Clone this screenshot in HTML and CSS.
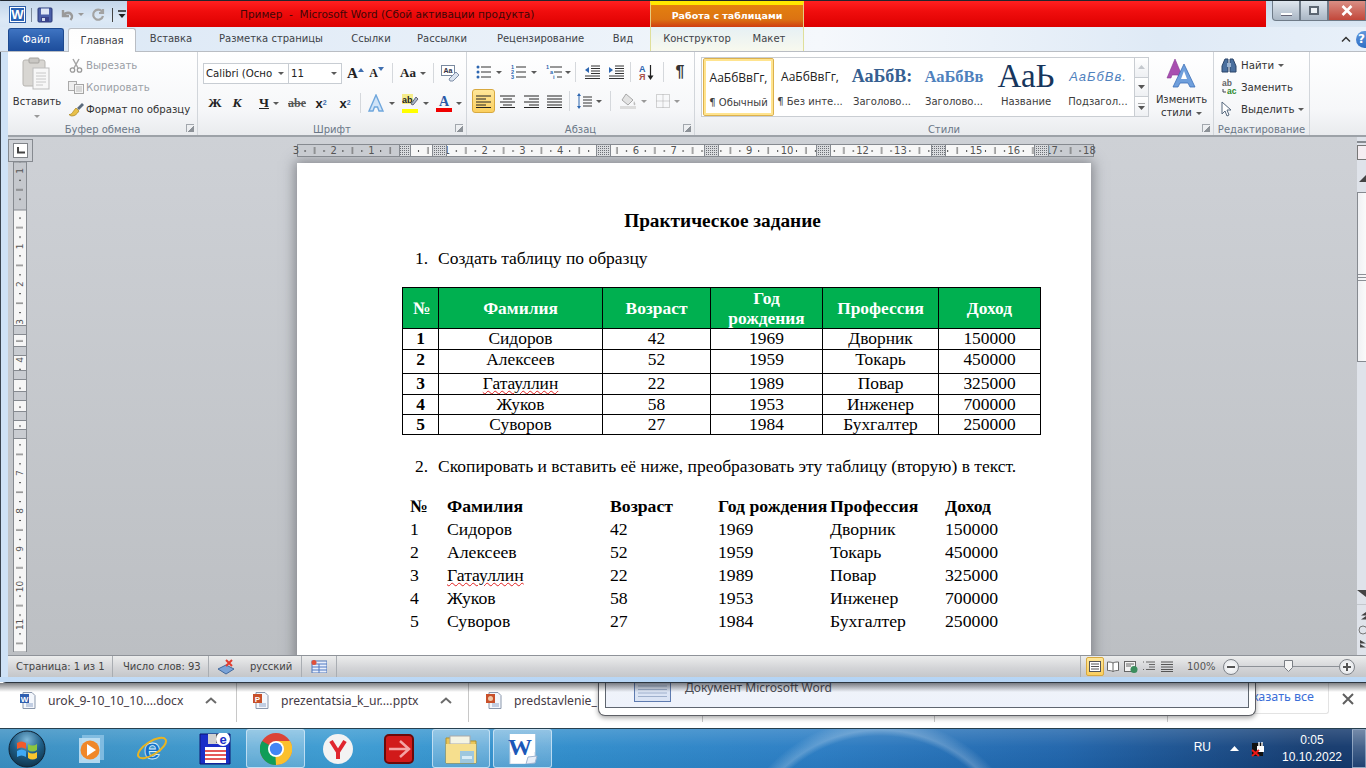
FILE: index.html
```html
<!DOCTYPE html>
<html lang="ru">
<head>
<meta charset="utf-8">
<title>Пример - Microsoft Word</title>
<link rel="stylesheet" href="styles.css">
</head>
<body>
<div class="screen">
  <div class="window">
    <div class="titlebar">
      <div class="qat">
        <svg class="qat-word" width="17" height="17" viewBox="0 0 17 17"><rect x=".5" y=".5" width="16" height="16" fill="#fff" stroke="#2f5fa8"/><rect x="2" y="2" width="13" height="13" fill="#2a62b4"/><text x="8.5" y="13" class="svg-w">W</text></svg>
        <span class="qat-sep"></span>
        <svg width="16" height="16" viewBox="0 0 16 16"><rect x="1" y="1" width="14" height="14" rx="1" fill="#4b5fa8" stroke="#2a3a78"/><rect x="4" y="1.500" width="8" height="6" fill="#dfe7f5"/><rect x="4" y="10" width="8" height="5" fill="#39428a"/><rect x="5" y="11" width="3" height="3" fill="#cfd8ea"/></svg>
        <svg class="qat-undo" width="14" height="14" viewBox="0 0 14 14"><path d="M3 2v6h6M3.500 7.500C6 3.500 11 4 12 8c.3 1.500-.5 3-1.500 4" fill="none" stroke="#9a9a9a" stroke-width="2.400"/></svg>
        <span class="caret caret-grey qat-c"></span>
        <svg class="qat-redo" width="14" height="14" viewBox="0 0 14 14"><path d="M11 3.500A5 5 0 1 0 12 8M12 1v4H8" fill="none" stroke="#a3a3a3" stroke-width="2.200"/></svg>
        <span class="qat-sep qat-sep2"></span>
        <svg width="8" height="9" viewBox="0 0 8 9"><path d="M0 1h8" stroke="#222" stroke-width="1.500"/><path d="M.5 4h7L4 8z" fill="#222"/></svg>
      </div>
      <div class="red red-left"><span class="doc-title">Пример&nbsp; -&nbsp; Microsoft Word (Сбой активации продукта)</span></div>
      <div class="context-head"><span>Работа с таблицами</span></div>
      <div class="red red-right"></div>
      <div class="winbtns">
        <div class="wb wb-min"><span class="wb-dash"></span></div>
        <div class="wb wb-max"><span class="wb-sq"></span></div>
        <div class="wb wb-close">
          <svg width="12" height="11" viewBox="0 0 12 11"><path d="M1.500 1l9 9M10.500 1l-9 9" stroke="#fff" stroke-width="2.600"/></svg>
        </div>
      </div>
    </div>

    <div class="tabs">
      <div class="tab tab-file">Файл</div>
      <div class="tab tab-home">Главная</div>
      <div class="tab t70">Вставка</div>
      <div class="tab t130">Разметка страницы</div>
      <div class="tab t70">Ссылки</div>
      <div class="tab t72">Рассылки</div>
      <div class="tab t125">Рецензирование</div>
      <div class="tab t40">Вид</div>
      <div class="tab-spacer7"></div>
      <div class="context-tabs">
        <div class="tab t92">Конструктор</div>
        <div class="tab t52">Макет</div>
      </div>
      <div class="tabs-right">
        <svg width="10" height="7" viewBox="0 0 10 7"><path d="M1 5.500L5 1.500l4 4" fill="none" stroke="#333" stroke-width="1.500"/></svg>
        <span class="help">?</span>
      </div>
    </div>

    <div class="ribbon">
      <section class="group g-clip">
        <div class="g-body clip-body">
          <div class="paste">
            <svg width="30" height="34" viewBox="0 0 30 34"><rect x="1" y="3" width="22" height="26" rx="2" fill="#d8d6d2" stroke="#b6b4b0"/><rect x="7" y="1" width="10" height="5" rx="1" fill="#c9c7c3" stroke="#a6a4a0"/><rect x="11" y="11" width="16" height="21" fill="#f7f7f7" stroke="#bdbdbd"/><path d="M14 16h10M14 19h10M14 22h10M14 25h10M14 28h7" stroke="#c8c8c8"/></svg>
            <span>Вставить</span>
            <i class="caret caret-grey"></i>
          </div>
          <div class="clip-list">
            <div class="clip-item off"><span class="clip-ic"><svg width="14" height="15" viewBox="0 0 14 15"><path d="M4 1l5 9M10 1L5 10" stroke="#a5a5a5" stroke-width="1.500"/><circle cx="3.500" cy="12" r="2.200" fill="none" stroke="#9a9a9a" stroke-width="1.300"/><circle cx="10.500" cy="12" r="2.200" fill="none" stroke="#9a9a9a" stroke-width="1.300"/></svg></span>Вырезать</div>
            <div class="clip-item off"><span class="clip-ic"><svg width="16" height="13" viewBox="0 0 16 13"><rect x=".5" y=".5" width="8" height="9" fill="#eee" stroke="#aaa"/><rect x="6.500" y="3.500" width="9" height="9" fill="#f4f4f4" stroke="#a5a5a5"/><path d="M8 6h6M8 8h6M8 10h6" stroke="#bbb"/></svg></span>Копировать</div>
            <div class="clip-item"><span class="clip-ic"><svg width="17" height="15" viewBox="0 0 17 15"><path d="M9 6l5-5 2 2-5 5z" fill="#5a6a7c"/><path d="M1 12.500C4 13 5 9 8 6l3 3c-2 3-4 5-7 5-1 0-2-.5-3-1.500z" fill="#e8c04a" stroke="#a88420" stroke-width=".7"/></svg></span>Формат по образцу</div>
          </div>
        </div>
        <div class="g-label">Буфер обмена</div>
        <i class="launcher"></i>
      </section>

      <section class="group g-font">
        <div class="g-body font-body">
          <div class="r-row">
            <div class="combo c-font"><span>Calibri (Осно</span><i class="caret"></i></div>
            <div class="combo c-size"><span>11</span><i class="caret"></i></div>
            <div class="btn w21 gl-a1 gl-big">A<svg class="sup-arrow" width="6" height="4" viewBox="0 0 6 4"><path d="M0 4l3-4 3 4z" fill="#3f6fb0"/></svg></div>
            <div class="btn w21 gl-a1">A<svg class="sup-arrow" width="6" height="4" viewBox="0 0 6 4"><path d="M0 0l3 4 3-4z" fill="#3f6fb0"/></svg></div>
            <i class="rsep m5"></i>
            <div class="btn w30 ml5"><span class="gl-aa">Aa</span><i class="caret"></i></div>
            <i class="rsep m5"></i>
            <div class="btn w24 ml5"><svg width="20" height="17" viewBox="0 0 20 17"><rect x=".5" y=".5" width="13" height="10" fill="#fff" stroke="#7a8aa0"/><text x="7" y="8" class="svg-aa">Aa</text><path d="M8 14l7-7 3 3-6 6H9z" fill="#dbe4f0" stroke="#8090a8"/></svg></div>
          </div>
          <div class="r-row row2">
            <div class="btn w22 gl-b">Ж</div>
            <div class="btn w22 gl-b gl-i">К</div>
            <div class="btn w32 ml5"><span class="gl-b gl-u">Ч</span><i class="caret"></i></div>
            <div class="btn w22 ml1"><span class="gl-strike">abe</span></div>
            <div class="btn w24 ml1 gl-xs"><b>x</b><sub>2</sub></div>
            <div class="btn w24 gl-xs"><b>x</b><sup>2</sup></div>
            <i class="rsep m3"></i>
            <div class="btn w30 ml5"><svg width="18" height="18" viewBox="0 0 18 18"><path d="M9 1l7 16h-4l-1.500-4h-3L6 17H2z" fill="#cfe3f8" stroke="#6ea6dc" stroke-width="1.400"/></svg><i class="caret"></i></div>
            <div class="btn w34 ml2"><span class="hl-wrap"><svg width="17" height="15" viewBox="0 0 17 15"><rect y="0" width="11" height="10" fill="#f5ec8a"/><text x="0" y="9" class="svg-ab">ab</text><path d="M9 10l5-7 2 2-5 6z" fill="#a9b8cc" stroke="#667"/></svg><i class="bar bar-y"></i></span><i class="caret"></i></div>
            <div class="btn w30 ml2"><span class="hl-wrap gl-ca"><span>A</span><i class="bar bar-r"></i></span><i class="caret"></i></div>
          </div>
        </div>
        <div class="g-label">Шрифт</div>
        <i class="launcher"></i>
      </section>

      <section class="group g-para">
        <div class="g-body para-body">
          <div class="r-row">
            <div class="btn w33"><svg width="16" height="14" viewBox="0 0 16 14"><path d="M5 2h10M5 7h10M5 12h10" stroke="#333"/><circle cx="2" cy="2" r="1.500" fill="#2d66b0"/><circle cx="2" cy="7" r="1.500" fill="#2d66b0"/><circle cx="2" cy="12" r="1.500" fill="#2d66b0"/></svg><i class="caret"></i></div>
            <div class="btn w34 ml2"><svg width="16" height="14" viewBox="0 0 16 14"><path d="M5 2h10M5 7h10M5 12h10" stroke="#333"/><text x="0" y="4" class="svg-n">1</text><text x="0" y="9" class="svg-n">2</text><text x="0" y="14" class="svg-n">3</text></svg><i class="caret"></i></div>
            <div class="btn w28 ml3"><svg width="17" height="14" viewBox="0 0 17 14"><path d="M4 2h12M8 7h8M11 12h5" stroke="#333"/><text x="0" y="4" class="svg-n">1</text><text x="4" y="9" class="svg-n">a</text><text x="7" y="14" class="svg-n">i</text></svg><i class="caret caret-tight"></i></div>
            <i class="rsep m3"></i>
            <div class="btn w24 ml4"><svg width="16" height="14" viewBox="0 0 16 14"><path d="M7 1h9M7 3.500h9M7 6h9M7 8.500h9M1 11h15M1 13.500h15" stroke="#333"/><path d="M5 2L1 5l4 3z" fill="#2d66b0"/></svg></div>
            <div class="btn w23"><svg width="16" height="14" viewBox="0 0 16 14"><path d="M7 1h9M7 3.500h9M7 6h9M7 8.500h9M1 11h15M1 13.500h15" stroke="#333"/><path d="M1 2l4 3-4 3z" fill="#2d66b0"/></svg></div>
            <i class="rsep m3"></i>
            <div class="btn w24 ml3"><svg width="15" height="17" viewBox="0 0 15 17"><text x="0" y="7.500" class="svg-sort sa">А</text><text x="0" y="16" class="svg-sort sb">Я</text><path d="M11.500 1v13" stroke="#222" stroke-width="1.200"/><path d="M8.500 11.500h6l-3 4.500z" fill="#222"/></svg></div>
            <i class="rsep m5"></i>
            <div class="btn w24 ml4 gl-pil">¶</div>
          </div>
          <div class="r-row row2p">
            <div class="btn w23 on"><svg width="15" height="13" viewBox="0 0 15 13"><path d="M0 1h15M0 4h10M0 7h15M0 10h10M0 12.500h15" stroke="#222"/></svg></div>
            <div class="btn w23 ml1"><svg width="15" height="13" viewBox="0 0 15 13"><path d="M0 1h15M3 4h9M0 7h15M3 10h9M0 12.500h15" stroke="#222"/></svg></div>
            <div class="btn w23 ml1"><svg width="15" height="13" viewBox="0 0 15 13"><path d="M0 1h15M5 4h10M0 7h15M5 10h10M0 12.500h15" stroke="#222"/></svg></div>
            <div class="btn w23"><svg width="15" height="13" viewBox="0 0 15 13"><path d="M0 1h15M0 4h15M0 7h15M0 10h15M0 12.500h15" stroke="#222"/></svg></div>
            <i class="rsep m3"></i>
            <div class="btn w32 ml3"><svg width="16" height="16" viewBox="0 0 16 16"><path d="M3 0L1 3h4zM3 16l-2-3h4z" fill="#2d66b0"/><path d="M3 3v10" stroke="#2d66b0"/><path d="M7 4h9M7 7h9M7 10h9M7 13h9" stroke="#333"/></svg><i class="caret"></i></div>
            <i class="rsep m5"></i>
            <div class="btn w36 ml4"><svg width="17" height="16" viewBox="0 0 17 16"><path d="M6 1l7 6-5 5-6-5z" fill="#e3e3e3" stroke="#a8a8a8"/><path d="M14 8c1 2 2 3 1 4s-2-1-1-4z" fill="#bcbcbc"/><rect x="0" y="13" width="16" height="3" fill="#dcdcdc"/></svg><i class="caret caret-grey"></i></div>
            <div class="btn w34"><svg width="14" height="14" viewBox="0 0 14 14"><path d="M.5.500h13v13H.500zM7 .5v13M.5 7h13" fill="none" stroke="#aaa" stroke-dasharray="1 1"/></svg><i class="caret caret-grey"></i></div>
          </div>
        </div>
        <div class="g-label">Абзац</div>
        <i class="launcher"></i>
      </section>

      <section class="group g-styles">
        <div class="g-body styles-body">
          <div class="gallery">
            <div class="style-item active"><span class="s-sample s-norm">АаБбВвГг,</span><span class="s-name">¶ Обычный</span></div>
            <div class="style-item"><span class="s-sample s-norm">АаБбВвГг,</span><span class="s-name">¶ Без инте...</span></div>
            <div class="style-item"><span class="s-sample s-h1">АаБбВ:</span><span class="s-name">Заголово...</span></div>
            <div class="style-item"><span class="s-sample s-h2">АаБбВв</span><span class="s-name">Заголово...</span></div>
            <div class="style-item"><span class="s-sample s-title">АаЬ</span><span class="s-name">Название</span></div>
            <div class="style-item"><span class="s-sample s-sub">АаБбВв.</span><span class="s-name">Подзагол...</span></div>
            <div class="gal-scroll">
              <div class="gs"><svg width="7" height="4" viewBox="0 0 7 4"><path d="M0 4l3.500-4L7 4z" fill="#c4c8cd"/></svg></div>
              <div class="gs"><svg width="7" height="4" viewBox="0 0 7 4"><path d="M0 0l3.500 4L7 0z" fill="#555"/></svg></div>
              <div class="gs"><svg width="7" height="7" viewBox="0 0 7 7"><path d="M0 0h7" stroke="#555"/><path d="M0 3l3.500 4L7 3z" fill="#555"/></svg></div>
            </div>
          </div>
          <div class="change-styles">
            <svg width="31" height="30" viewBox="0 0 31 30"><path d="M9 1l8 19h-4l-1-3H6l-1 3H1z" fill="#a84fb0" stroke="#8a3a95" stroke-width=".6"/><path d="M18 6l11 23h-5l-2-4h-8l-2 4H7z" fill="#6f9fdc" stroke="#3c70b8" stroke-width=".8"/><path d="M18 13l-3 8h6z" fill="#fff"/></svg>
            <span>Изменить</span>
            <span>стили <i class="caret caret-inline"></i></span>
          </div>
        </div>
        <div class="g-label g-label-st">Стили</div>
        <i class="launcher"></i>
      </section>

      <section class="group g-edit">
        <div class="g-body edit-body">
          <div class="edit-item"><span class="edit-ic"><svg width="16" height="15" viewBox="0 0 16 15"><path d="M4 1h3v13H1V8z" fill="#4a6f9e" stroke="#2b4468"/><path d="M12 1H9v13h6V8z" fill="#4a6f9e" stroke="#2b4468"/><rect x="6" y="5" width="4" height="4" fill="#9bb4d2"/></svg></span>Найти <i class="caret ml4"></i></div>
          <div class="edit-item"><span class="edit-ic"><svg width="17" height="16" viewBox="0 0 17 16"><text x="1" y="7" class="svg-rep g1">ab</text><text x="6" y="15" class="svg-rep g2">ac</text><path d="M2 10v3h3" fill="none" stroke="#445"/></svg></span>Заменить</div>
          <div class="edit-item"><span class="edit-ic"><svg width="12" height="16" viewBox="0 0 12 16"><path d="M1 1v12l3-3 2 5 2-1-2-5h4z" fill="#fff" stroke="#56687e"/></svg></span>Выделить <i class="caret ml4"></i></div>
        </div>
        <div class="g-label">Редактирование</div>
      </section>
    </div>

    <div class="workspace">
      <div class="left-col">
        <div class="corner"><span class="corner-box"><svg width="8" height="7" viewBox="0 0 8 7"><path d="M1 0v5.500h7" fill="none" stroke="#444" stroke-width="2"/></svg></span></div>
        <svg class="vruler" width="14" height="490" viewBox="0 0 14 490">
          <defs>
            <pattern id="vt" patternUnits="userSpaceOnUse" x="0" y="46.600" width="14" height="37.800">
              <rect x="6" y="9" width="2" height="1" fill="#444"/><rect x="3" y="18.500" width="7" height="1" fill="#555"/><rect x="6" y="28" width="2" height="1" fill="#444"/>
            </pattern>
          </defs>
          <rect x=".5" y="0" width="13" height="490" fill="#f6f6f6" stroke="#868a90"/>
          <rect x=".5" y="0" width="13" height="48" fill="#c5c8cd" stroke="#868a90"/>
          <rect x="1" y="0" width="12" height="490" fill="url(#vt)"/>
          <g class="vnums">
            <text transform="translate(10,8.800) rotate(-90)">1</text>
            <text transform="translate(10,84.400) rotate(-90)">1</text>
            <text transform="translate(10,122.200) rotate(-90)">2</text>
            <text transform="translate(10,160) rotate(-90)">3</text>
            <text transform="translate(10,197.800) rotate(-90)">4</text>
            <text transform="translate(10,311.200) rotate(-90)">7</text>
            <text transform="translate(10,349) rotate(-90)">8</text>
            <text transform="translate(10,386.800) rotate(-90)">9</text>
            <text transform="translate(10,424.600) rotate(-90)">10</text>
            <text transform="translate(10,462.400) rotate(-90)">11</text>
          </g>
          <g class="vmarks">
            <rect x=".5" y="163.500" width="13" height="9"/><rect x=".5" y="184.500" width="13" height="9"/><rect x=".5" y="208.500" width="13" height="9"/><rect x=".5" y="229.500" width="13" height="9"/><rect x=".5" y="249.500" width="13" height="9"/><rect x=".5" y="267.500" width="13" height="9"/>
          </g>
        </svg>
      </div>
      <div class="doc-col">
        <svg class="hruler" width="806" height="13" viewBox="-6 0 806 13">
          <defs>
            <pattern id="ht" patternUnits="userSpaceOnUse" x="113" y="0" width="37.800" height="13">
              <rect x="9" y="6" width="1" height="2" fill="#444"/><rect x="18.500" y="3" width="1" height="7" fill="#555"/><rect x="28" y="6" width="1" height="2" fill="#444"/>
            </pattern>
            <pattern id="hd" patternUnits="userSpaceOnUse" x="0" y="0" width="2" height="2"><rect width="2" height="2" fill="#d9dbde"/><rect width="1" height="1" fill="#6d7076"/></pattern>
          </defs>
          <rect x="1.500" y=".5" width="796" height="12" fill="#c9ccd1" stroke="#868a90"/>
          <rect x="115" y="1" width="623" height="11" fill="#f7f7f7"/>
          <rect x="2" y="1" width="795" height="11" fill="url(#ht)"/>
          <g class="hnums">
            <text x="0" y="10">3</text><text x="37.600" y="10">2</text><text x="75.400" y="10">1</text>
            <text x="151" y="10">1</text><text x="188.600" y="10">2</text><text x="226.400" y="10">3</text><text x="264.200" y="10">4</text><text x="340" y="10">6</text><text x="377.600" y="10">7</text><text x="453.200" y="10">9</text><text x="491" y="10">10</text><text x="566.600" y="10">12</text><text x="604.400" y="10">13</text><text x="680" y="10">15</text><text x="717.800" y="10">16</text><text x="755.600" y="10">17</text><text x="793.400" y="10">18</text>
          </g>
          <g class="hmarks">
            <rect x="103.500" y=".5" width="11" height="12"/><rect x="136.500" y=".5" width="14" height="12"/><rect x="300.500" y=".5" width="14" height="12"/><rect x="408.500" y=".5" width="14" height="12"/><rect x="520.500" y=".5" width="14" height="12"/><rect x="635.500" y=".5" width="14" height="12"/><rect x="738.500" y=".5" width="14" height="12"/>
          </g>
        </svg>
        <article class="page">
          <h1 class="doc-h">Практическое задание</h1>
          <div class="doc-item"><span class="num">1.</span><span>Создать таблицу по образцу</span></div>
          <table class="t1">
            <colgroup><col class="c1"><col class="c2"><col class="c3"><col class="c4"><col class="c5"><col class="c6"></colgroup>
            <thead><tr><th>№</th><th>Фамилия</th><th>Возраст</th><th>Год рождения</th><th>Профессия</th><th>Доход</th></tr></thead>
            <tbody>
              <tr class="r21"><th>1</th><td>Сидоров</td><td>42</td><td>1969</td><td>Дворник</td><td>150000</td></tr>
              <tr class="r24"><th>2</th><td>Алексеев</td><td>52</td><td>1959</td><td>Токарь</td><td>450000</td></tr>
              <tr class="r21"><th>3</th><td><span class="spell">Гатауллин</span></td><td>22</td><td>1989</td><td>Повар</td><td>325000</td></tr>
              <tr class="r20"><th>4</th><td>Жуков</td><td>58</td><td>1953</td><td>Инженер</td><td>700000</td></tr>
              <tr class="r20"><th>5</th><td>Суворов</td><td>27</td><td>1984</td><td>Бухгалтер</td><td>250000</td></tr>
            </tbody>
          </table>
          <div class="doc-item di2"><span class="num">2.</span><span>Скопировать и вставить её ниже, преобразовать эту таблицу (вторую) в текст.</span></div>
          <div class="t2">
            <b>№</b><b>Фамилия</b><b>Возраст</b><b>Год рождения</b><b>Профессия</b><b>Доход</b>
            <span>1</span><span>Сидоров</span><span>42</span><span>1969</span><span>Дворник</span><span>150000</span>
            <span>2</span><span>Алексеев</span><span>52</span><span>1959</span><span>Токарь</span><span>450000</span>
            <span>3</span><span><span class="spell">Гатауллин</span></span><span>22</span><span>1989</span><span>Повар</span><span>325000</span>
            <span>4</span><span>Жуков</span><span>58</span><span>1953</span><span>Инженер</span><span>700000</span>
            <span>5</span><span>Суворов</span><span>27</span><span>1984</span><span>Бухгалтер</span><span>250000</span>
          </div>
        </article>
      </div>
      <div class="scrollbar">
        <div class="sb-top"><span class="sb-dash"></span><span class="sb-ruler"></span></div>
        <div class="sb-arrow"><svg width="9" height="7" viewBox="0 0 9 7"><path d="M9 0v7H2z" fill="#444"/></svg></div>
        <div class="sb-thumb"><svg width="9" height="7" viewBox="0 0 9 7"><path d="M0 .5h9M0 3.500h9M0 6.500h9" stroke="#8c9096"/></svg></div>
        <div class="sb-track"></div>
        <div class="sb-arrow sb-down"><svg width="9" height="7" viewBox="0 0 9 7"><path d="M0 0h9v7z" fill="#444"/></svg></div>
        <div class="sb-browse">
          <svg width="9" height="8" viewBox="0 0 9 8"><path d="M9 0L4 3.500h5zM9 4L4 7.500h5z" fill="#444"/></svg>
          <svg width="9" height="10" viewBox="0 0 9 10"><circle cx="6" cy="5" r="4" fill="none" stroke="#777"/></svg>
          <svg width="9" height="8" viewBox="0 0 9 8"><path d="M3 0l6 3.500H3zM3 4l6 3.500H3z" fill="#444"/></svg>
        </div>
      </div>
    </div>

    <div class="statusbar">
      <span class="st st1">Страница: 1 из 1</span>
      <span class="st st2">Число слов: 93</span>
      <span class="st st3"><svg width="18" height="16" viewBox="0 0 18 16"><path d="M1 10l8-4 8 4-8 5z" fill="#7aa3d8" stroke="#41699e"/><path d="M9 1l6 6M15 1L9 7" stroke="#e23b2e" stroke-width="2"/></svg><span class="st-lang">русский</span></span>
      <span class="st st4"><svg width="16" height="13" viewBox="0 0 16 13"><rect x="1" y="1" width="15" height="12" fill="#e8eefb" stroke="#5076b8"/><path d="M1 4h15M1 7h15M1 10h15M8 4v9" stroke="#4f78c2"/><circle cx="3" cy="2.500" r="2.500" fill="#e0503a"/></svg></span>
      <span class="st-fill"></span>
      <div class="views">
        <span class="view on"><svg width="12" height="11" viewBox="0 0 12 11"><rect x=".5" y=".5" width="11" height="10" fill="#fff" stroke="#555"/><path d="M2 3h8M2 5.500h8M2 8h8" stroke="#555"/></svg></span>
        <span class="view"><svg width="12" height="11" viewBox="0 0 12 11"><path d="M6 2C4.500 1 2 1 .5 1v8.500c1.500 0 4 0 5.500 1 1.500-1 4-1 5.500-1V1C10 1 7.500 1 6 2v8.500" fill="#fff" stroke="#666"/></svg></span>
        <span class="view"><svg width="14" height="12" viewBox="0 0 14 12"><rect x=".5" y=".5" width="11" height="10" fill="#f3f3f3" stroke="#666"/><path d="M2 3h8M2 5h5" stroke="#666"/><circle cx="10" cy="8.500" r="3.500" fill="#3b8d5d"/></svg></span>
        <span class="view"><svg width="12" height="11" viewBox="0 0 12 11"><path d="M3 1h9M6 3.500h6M6 6h6M3 8.500h9" stroke="#666"/><path d="M0 1h1M0 8.500h1" stroke="#666"/></svg></span>
        <span class="view"><svg width="12" height="11" viewBox="0 0 12 11"><path d="M0 1h12M0 3.500h12M0 6h12M0 8.500h12M0 10.500h12" stroke="#555"/></svg></span>
      </div>
      <span class="zoom-val">100%</span>
      <div class="zoomer">
        <span class="zb"><i class="zm"></i></span>
        <span class="z-line"><svg class="z-thumb" width="9" height="12" viewBox="0 0 9 12"><path d="M.5.500h8v7l-4 4-4-4z" fill="#f4f4f4" stroke="#7a7e84"/></svg></span>
        <span class="zb"><i class="zm"></i><i class="zp"></i></span>
      </div>
    </div>
    <div class="win-bottom"></div>
  </div>

  <div class="downloads">
    <div class="dl dl1"><svg width="16" height="17" viewBox="0 0 16 17"><path d="M3 .5h9l3 3v13H3z" fill="#f4f7fc" stroke="#8a97ac"/><rect y="2" width="9" height="9" fill="#2f5fb0"/><text x="4.500" y="9.500" class="svg-f">W</text><path d="M6 12h7M6 14h7" stroke="#8fa4c8"/></svg><span class="dl-name">urok_9-10_10_10....docx</span><svg class="dl-up" width="12" height="7" viewBox="0 0 12 7"><path d="M1 6l5-4.500L11 6" fill="none" stroke="#6b6b6b" stroke-width="2"/></svg></div>
    <div class="dl dl2"><svg width="16" height="17" viewBox="0 0 16 17"><path d="M3 .5h9l3 3v13H3z" fill="#f4f7fc" stroke="#8a97ac"/><rect y="2" width="9" height="9" fill="#c8502a"/><text x="4.500" y="9.500" class="svg-f">P</text><path d="M6 12h7M6 14h7" stroke="#8fa4c8"/></svg><span class="dl-name">prezentatsia_k_ur....pptx</span><svg class="dl-up" width="12" height="7" viewBox="0 0 12 7"><path d="M1 6l5-4.500L11 6" fill="none" stroke="#6b6b6b" stroke-width="2"/></svg></div>
    <div class="dl dl3"><svg width="16" height="17" viewBox="0 0 16 17"><path d="M3 .5h9l3 3v13H3z" fill="#f4f7fc" stroke="#8a97ac"/><rect y="2" width="9" height="9" fill="#c8502a"/><circle cx="4.500" cy="6.500" r="2.500" fill="#f0c8a8"/><path d="M6 12h7M6 14h7" stroke="#8fa4c8"/></svg><span class="dl-name">predstavlenie_</span></div>
    <div class="dl dl4"></div>
    <div class="dl dl5"></div>
    <div class="dl-showall"><span class="showall-btn">Показать все</span></div>
    <svg class="dl-x" width="12" height="12" viewBox="0 0 12 12"><path d="M1 1l10 10M11 1L1 11" stroke="#5f5f5f" stroke-width="2"/></svg>
  </div>

  <div class="peek">
    <div class="peek-inner">
      <svg class="peek-ic" width="37" height="19" viewBox="0 0 37 19"><rect x=".5" y="-2" width="36" height="20.500" fill="#dbe4f4" stroke="#5e7bb0"/><path d="M4 3h29M4 6.500h29M4 10h29M4 13.500h29" stroke="#9fb0cc"/></svg>
      <span>Документ Microsoft Word</span>
    </div>
  </div>
  <div class="win-shadow"></div>

  <div class="taskbar">
    <div class="tb-start">
      <svg width="38" height="38" viewBox="0 0 38 38"><defs><radialGradient id="orb" cx=".5" cy=".25" r=".8"><stop offset="0" stop-color="#7fb8d8"/><stop offset=".5" stop-color="#1f5f88"/><stop offset="1" stop-color="#0e2f44"/></radialGradient></defs><circle cx="19" cy="19" r="18" fill="url(#orb)" stroke="#123"/><path d="M9 13c3-2 6-2 9 0v6c-3-2-6-2-9 0z" fill="#f25a2a"/><path d="M20 14c3 2 6 2 9 0v6c-3 2-6 2-9 0z" fill="#8cc63f"/><path d="M9 21c3-2 6-2 9 0v6c-3-2-6-2-9 0z" fill="#3fa9f5"/><path d="M20 22c3 2 6 2 9 0v6c-3 2-6 2-9 0z" fill="#f7c52e"/></svg>
    </div>
    <div class="tb-i w-wmp"><svg width="28" height="30" viewBox="0 0 28 30"><path d="M4 1h22v25H4z" fill="#8fc4e6" opacity=".8"/><path d="M1 4h21v25H1z" fill="#bfe0f4" opacity=".9"/><circle cx="12" cy="16" r="9.500" fill="#f0882a"/><path d="M9 10l9 6-9 6z" fill="#fff"/></svg></div>
    <div class="tb-i w-ie"><svg width="33" height="37" viewBox="0 -2 33 37"><text x="16" y="27" class="svg-ie">e</text><ellipse cx="16" cy="16" rx="16" ry="6.500" transform="rotate(-32 16 16)" fill="none" stroke="#e9b422" stroke-width="2"/></svg></div>
    <div class="tb-i w-fl"><svg width="32" height="32" viewBox="0 0 32 32"><path d="M1 1h30v30H1z" fill="#1a2fc8" stroke="#0c1670"/><rect x="9" y="1" width="16" height="10" fill="#d0d0d0"/><rect x="17" y="1" width="5" height="9" fill="#555"/><rect x="6" y="14" width="21" height="16" fill="#fff"/><path d="M6 18h21M6 22h21M6 26h21" stroke="#d22" stroke-width="1.500"/><circle cx="24" cy="6" r="7" fill="#fff"/><text x="24" y="11" class="svg-e">e</text></svg></div>
    <div class="tb-i tb-box w-ch"><svg width="32" height="32" viewBox="0 0 32 32"><circle cx="16" cy="16" r="16" fill="#db4437"/><path d="M16 16L2.100 8A16 16 0 0 0 16 32z" fill="#0f9d58"/><path d="M16 8h14a16 16 0 0 1-14 24l-1-16z" fill="#fbc02d"/><circle cx="16" cy="16" r="8" fill="#fff"/><circle cx="16" cy="16" r="6.200" fill="#4285f4"/></svg></div>
    <div class="tb-i w-ya"><svg width="30" height="30" viewBox="0 0 30 30"><circle cx="15" cy="15" r="15" fill="#f3f3f3"/><path d="M8 7l7 11V25M22 7l-7 11" fill="none" stroke="#e0262e" stroke-width="4"/></svg></div>
    <div class="tb-i w-red"><svg width="30" height="30" viewBox="0 0 30 30"><rect x="1" y="1" width="28" height="28" rx="4" fill="#d11a1a" stroke="#6c0a0a" stroke-width="2"/><path d="M5 15h20M16 7l9 8-9 8" fill="none" stroke="#f4a4a4" stroke-width="2.500"/></svg></div>
    <div class="tb-i tb-box w-ex"><svg width="34" height="30" viewBox="0 0 34 30"><path d="M2 4h12l3 3h15v22H2z" fill="#e9c65a" stroke="#b1902c"/><rect x="6" y="2" width="20" height="8" fill="#f4f4e4" stroke="#aaa"/><path d="M2 10h30v19H2z" fill="#f6df8e"/><rect x="16" y="17" width="14" height="12" fill="#9ec7de"/><path d="M18 22h10v3h-10z" fill="#d9ecf6"/></svg></div>
    <div class="tb-i tb-box w-wd"><svg width="31" height="30" viewBox="0 0 31 30"><path d="M3 0h25v23l-6 7H3z" fill="#fff" stroke="#c8d4e4"/><path d="M3 0h25v18H3z" fill="#fff"/><text x="13" y="21" class="svg-wd">W</text><path d="M21 23l9-1-2 7-9 1z" fill="#e7eef8" stroke="#9fb4d0"/></svg></div>
    <div class="tb-fill"></div>
    <span class="tb-lang">RU</span>
    <svg class="tb-tri" width="9" height="5" viewBox="0 0 9 5"><path d="M0 5l4.500-5L9 5z" fill="#fff"/></svg>
    <svg class="tb-pw" width="14" height="16" viewBox="0 0 14 16"><rect x="1" y="2" width="11" height="13" fill="#111"/><path d="M6 5h7v6H6z" fill="#fff"/><path d="M8 1v4M11 1v4" stroke="#fff" stroke-width="1.400"/><path d="M1 9l7 6M8 9l-7 6" stroke="#f01818" stroke-width="2"/></svg>
    <div class="tb-clock"><span>0:05</span><span>10.10.2022</span></div>
    <div class="tb-show"></div>
  </div>
</div>
</body>
</html>
```

FILE: styles.css
```css
* { box-sizing: border-box; }
html, body { margin: 0; padding: 0; }
body { width: 1366px; height: 768px; overflow: hidden; background: #fff; font-family: "DejaVu Sans", sans-serif; font-size: 10px; color: #3b3b3b; }
i { display: block; font-style: normal; }
svg { display: block; flex: none; }

.screen { position: relative; width: 1366px; height: 768px; display: flex; flex-direction: column; overflow: hidden; }
.window { height: 683px; display: flex; flex-direction: column; background: #cfe2f6; border-top: 1px solid #20262d; border-left: 1px solid #3a4450; padding-left: 1px; position: relative; z-index: 3; border-bottom: 1px solid #2d3640; border-bottom-left-radius: 6px; }

/* title */
.titlebar { height: 26px; display: flex; margin-left: -2px; flex: none; }
.qat { width: 127px; display: flex; align-items: center; padding: 1px 0 0 9px; gap: 4px; background: linear-gradient(#c3d6ea, #dde9f6 70%, #d7e5f4); }
.qat-word { margin-right: 1px; }
.qat-sep { width: 1px; height: 14px; background: #7d8b9b; margin: 0 1px 0 0; }
.qat-sep2 { margin-left: 3px; background: #444; }
.qat-undo { margin-left: 3px; }
.qat-c { margin-left: 0; }
.qat-redo { margin-left: 3px; }
.red { background: linear-gradient(#ff2020, #f00d0d 40%, #dd0000); height: 26px; display: flex; align-items: center; }
.red-left { width: 523px; padding-left: 113px; }
.red-right { width: 462px; }
.doc-title { font-size: 10.500px; color: #3f0707; white-space: pre; }
.context-head { width: 154px; display: flex; justify-content: center; padding-top: 5px; border-left: 1px solid #e5cc80; border-right: 1px solid #e5cc80; border-top: 4px solid #ffe800; background: linear-gradient(#e38010, #dc7312 65%, #cf3d10); color: #fff; font-weight: 700; font-size: 9.500px; }
.winbtns { width: 100px; display: flex; padding-left: 6px; align-items: flex-start; background: linear-gradient(#c6d8ea, #dbe7f3); }
.wb { height: 20px; display: flex; align-items: center; justify-content: center; border: 1px solid #6f7b88; border-top: 0; background: linear-gradient(#dfe6ee, #a9b6c4); }
.wb-min { width: 28px; border-bottom-left-radius: 4px; }
.wb-dash { width: 11px; height: 3px; background: #fff; border: 1px solid #667; border-width: 0 0 1px; margin-top: 8px; }
.wb-max { width: 28px; }
.wb-sq { width: 10px; height: 9px; border: 2px solid #5c6672; background: #eef2f6; }
.wb-close { width: 38px; background: linear-gradient(#d98f85, #c2473a); border-bottom-right-radius: 0; }

/* tabs */
.tabs { height: 25px; margin-left: -2px; padding-left: 8px; display: flex; align-items: stretch; flex: none; background: linear-gradient(90deg, #dae7f5, #eaf1f9 40%, #f5f8fc 60%, #dfeaf6 85%, #e8f0f9); border-bottom: 1px solid #b9bdc3; font-size: 10px; }
.tab { display: flex; align-items: center; justify-content: center; color: #3e4348; white-space: nowrap; padding-bottom: 1px; }
.tab-file { width: 56px; margin: 1px 4px 0 0; color: #fff; border: 1px solid #1d4a90; border-bottom: 0; border-radius: 3px 3px 0 0; background: linear-gradient(#3f74c2, #2a5dab 55%, #1d4d9c); }
.tab-home { width: 68px; margin-top: 1px; margin-bottom: -1px; background: linear-gradient(#fdfdfd, #fff); border: 1px solid #b9bdc3; border-bottom: 0; border-radius: 3px 3px 0 0; z-index: 2; padding-bottom: 0; }
.t70 { width: 70px; } .t130 { width: 130px; } .t72 { width: 72px; } .t125 { width: 125px; } .t40 { width: 40px; } .t92 { width: 92px; } .t52 { width: 52px; }
.tab-spacer7 { width: 7px; }
.context-tabs { width: 154px; display: flex; border-left: 1px solid #dfdf9a; border-right: 1px solid #dfdf9a; background: linear-gradient(#e6f0f4, #f8f9ee); }
.tabs-right { flex: 1; display: flex; align-items: center; justify-content: flex-end; gap: 5px; padding-right: 0; }
.help { width: 15px; height: 17px; border-radius: 9px 0 0 9px; background: linear-gradient(#5f97dd, #2f6fc4); color: #fff; font-weight: 700; font-size: 12px; display: flex; align-items: center; justify-content: center; margin-right: -5px; overflow: hidden; padding-right: 4px; }

/* ribbon */
.ribbon { height: 85px; flex: none; margin-left: 6px; display: flex; background: linear-gradient(#fff, #f6f7f9 70%, #e9ebee); border-bottom: 2px solid #9da2a8; }
.group { position: relative; flex: none; height: 83px; display: flex; flex-direction: column; border-right: 1px solid #d2d6db; }
.g-clip { width: 190px; } .g-font { width: 269px; } .g-para { width: 228px; } .g-styles { width: 519px; } .g-edit { width: 96px; }
.g-body { height: 71px; flex: none; }
.g-label { height: 12px; text-align: center; color: #6a7787; font-size: 10px; line-height: 13px; }
.g-label-st { padding-right: 20px; }
.launcher { position: absolute; right: 3px; bottom: 3px; width: 8px; height: 8px; border: 1px solid #a2a7ad; border-width: 1px 0 0 1px; background: linear-gradient(135deg, transparent 55%, #8d9298 55%); }

.caret { width: 0; height: 0; border: 3px solid transparent; border-top: 3px solid #5a5a5a; border-bottom: 0; flex: none; }
.caret-grey { border-top-color: #999; }
.caret-inline { display: inline-block; vertical-align: middle; margin-left: 1px; }
.caret-tight { margin-left: -2px; }

/* clipboard */
.clip-body { display: flex; }
.paste { width: 58px; display: flex; flex-direction: column; align-items: center; padding-top: 5px; font-size: 10px; color: #333; }
.paste span { margin-top: 3px; line-height: 16px; }
.paste .caret { margin-top: 5px; }
.clip-list { padding-top: 2px; }
.clip-item { height: 22px; display: flex; align-items: center; font-size: 10.200px; color: #333; white-space: nowrap; }
.clip-item.off { color: #9ba0a6; }
.clip-ic { width: 20px; display: flex; justify-content: center; }

/* rows */
.r-row { display: flex; align-items: center; }
.font-body { padding: 10px 0 0 5px; }
.para-body { padding: 9px 0 0 5px; }
.row2 { margin: 8px 0 0 1px; }
.row2p { margin-top: 6px; }
.btn { height: 22px; display: flex; align-items: center; justify-content: center; gap: 4px; flex: none; color: #222; }
.btn.on { border: 1px solid #d8a93f; border-radius: 3px; background: linear-gradient(#ffe79a, #fbcf5f); height: 24px; }
.w21 { width: 21px; } .w22 { width: 22px; } .w23 { width: 23px; } .w24 { width: 24px; } .w28 { width: 28px; } .w30 { width: 30px; } .w32 { width: 32px; } .w33 { width: 33px; } .w34 { width: 34px; } .w36 { width: 36px; }
.ml1 { margin-left: 1px; } .ml2 { margin-left: 2px; } .ml3 { margin-left: 3px; } .ml4 { margin-left: 4px; } .ml5 { margin-left: 5px; }
.rsep { width: 1px; height: 20px; background: #d5d8dc; flex: none; }
.m3 { margin-left: 3px; } .m5 { margin-left: 5px; }
.combo { height: 21px; display: flex; align-items: center; justify-content: space-between; border: 1px solid #c8cdd3; background: #fff; font-size: 10.200px; color: #222; padding: 0 4px 0 2px; white-space: nowrap; font-family: "DejaVu Sans", sans-serif; }
.c-font { width: 86px; }
.c-size { width: 54px; margin-left: -1px; margin-right: 3px; }
.gl-a1 { font: 700 12px "Liberation Serif", serif; position: relative; align-items: flex-end; padding-bottom: 3px; gap: 0; }
.gl-big { font-size: 15px; padding-bottom: 2px; }
.sup-arrow { margin-bottom: 10px; }
.gl-aa { font: 700 13px "Liberation Serif", serif; }
.gl-b { font: 700 13.500px "Liberation Serif", serif; color: #222; }
.gl-i { font-style: italic; }
.gl-u { text-decoration: underline; }
.gl-strike { font: 700 12px "Liberation Serif", serif; text-decoration: line-through; color: #555; }
.gl-xs { font: 700 13px "Liberation Sans", sans-serif; gap: 0; align-items: center; }
.gl-xs sub, .gl-xs sup { font-size: 7px; color: #3f6fb0; line-height: 0; }
.hl-wrap { display: flex; flex-direction: column; align-items: center; gap: 0; }
.bar { width: 16px; height: 4px; }
.bar-y { background: #ffff00; }
.bar-r { background: #f00000; }
.gl-ca { font: 700 14px "Liberation Serif", serif; color: #2a5aa8; line-height: 13px; }
.gl-pil { font: 700 16px "Liberation Sans", sans-serif; color: #333; }

/* styles */
.styles-body { display: flex; padding: 5px 0 0 6px; }
.gallery { width: 448px; height: 60px; display: flex; border: 1px solid #c9cdd2; background: #fff; }
.style-item { width: 72px; flex: none; display: flex; flex-direction: column; align-items: center; height: 58px; padding-top: 1px; overflow: hidden; }
.style-item.active { width: 71px; margin-left: 1px; border: 1px solid #dcb14d; box-shadow: inset 0 0 0 2px #ffe48f; border-radius: 2px; }
.s-sample { height: 35px; display: flex; align-items: center; white-space: nowrap; color: #222; }
.s-norm { font: 12px "Open Sans", sans-serif; }
.s-h1 { font: 700 18px "Liberation Serif", serif; color: #365f91; }
.s-h2 { font: 700 16.500px "Liberation Serif", serif; color: #4f81bd; }
.s-title { font: 33px "Liberation Serif", serif; color: #17365d; }
.s-sub { font: italic 13px "Liberation Sans", sans-serif; color: #4f81bd; letter-spacing: 1px; }
.s-name { font-size: 10px; color: #3c3c3c; white-space: nowrap; line-height: 14px; margin-top: 1px; }
.gal-scroll { width: 14px; display: flex; flex-direction: column; flex: none; border-left: 1px solid #c9cdd2; margin-left: auto; }
.gs { flex: 1; display: flex; align-items: center; justify-content: center; background: linear-gradient(#fff, #eef0f3); border-bottom: 1px solid #c9cdd2; }
.gs:last-child { border-bottom: 0; }
.change-styles { width: 63px; display: flex; flex-direction: column; align-items: center; font-size: 10px; line-height: 13px; color: #333; padding: 1px 0 0 2px; white-space: nowrap; }
.change-styles svg { margin-bottom: 5px; }

/* editing */
.edit-body { padding: 2px 0 0 7px; }
.edit-item { height: 22px; display: flex; align-items: center; font-size: 10.200px; color: #333; }
.edit-ic { width: 20px; display: flex; justify-content: flex-start; }

/* workspace */
.workspace { flex: 1; min-height: 0; margin-left: 6px; display: flex; overflow: hidden; background: linear-gradient(#ced1d6, #bcbfc3); }
.left-col { width: 25px; flex: none; }
.corner { width: 25px; height: 23px; margin-top: 2px; border: 1px solid #868a90; display: flex; align-items: center; justify-content: center; }
.corner-box { width: 15px; height: 15px; background: #fff; border: 1px solid #808489; display: flex; align-items: center; justify-content: center; }
.vruler { margin-left: 5px; }
.vruler text { font-size: 9px; text-anchor: middle; fill: #555; font-family: "DejaVu Sans", sans-serif; }
.vmarks rect { fill: #c9ccd1; stroke: #868a90; }
.doc-col { flex: 1; min-width: 0; overflow: hidden; }
.hruler { margin: 7px 0 0 257px; }
.hruler text { font-size: 10px; text-anchor: middle; fill: #555; font-family: "DejaVu Sans", sans-serif; }
.hmarks rect { fill: url(#hd); stroke: #868a90; }
.page { width: 794px; height: 500px; margin: 6px 0 0 264px; background: #fff; box-shadow: 0 0 12px 2px rgba(90,92,98,.65); padding: 46px 48px 0 105px; font: 17.500px/23px "Liberation Serif", serif; color: #000; }
.doc-h { font: 700 19.300px/24px "Liberation Serif", serif; text-align: center; margin: 0; }
.doc-item { display: flex; margin-top: 13px; padding-left: 13px; font-size: 17.500px; line-height: 24px; white-space: nowrap; }
.di2 { margin-top: 19px; }
.num { width: 23px; flex: none; }
.t1 { width: 638px; margin-top: 17px; border-collapse: collapse; table-layout: fixed; font-size: 17.400px; line-height: 19px; }
.c1 { width: 36px; } .c2 { width: 164px; } .c3 { width: 108px; } .c4 { width: 112px; } .c5 { width: 116px; } .c6 { width: 102px; }
.t1 th, .t1 td { border: 1px solid #000; text-align: center; padding: 0; vertical-align: top; }
.t1 thead tr { height: 41px; background: #00b050; color: #fff; }
.t1 thead th { line-height: 20px; padding: 0 10px; vertical-align: middle; }
.r21 { height: 21px; } .r20 { height: 20px; } .r24 { height: 24px; }
.spell { text-decoration: underline wavy #e02020; text-decoration-thickness: 1px; text-underline-offset: 1px; }
.t2 { display: grid; grid-template-columns: 37px 163px 108px 112px 115px 90px; grid-auto-rows: 23px; margin: 17px 0 0 8px; font-size: 17.700px; line-height: 23px; white-space: nowrap; }

/* scrollbar */
.scrollbar { width: 9px; flex: none; display: flex; flex-direction: column; background: #dfe3ea; overflow: hidden; }
.sb-top { height: 27px; padding-top: 4px; }
.sb-dash { display: block; width: 9px; height: 2px; background: #888c92; margin: 0 0 2px 0; }
.sb-ruler { display: block; width: 12px; height: 15px; border: 1px solid #777; background: #f5eef2; }
.sb-arrow { height: 28px; display: flex; align-items: center; padding-left: 0; }
.sb-thumb { height: 170px; border: 1px solid #868a90; border-right: 0; background: linear-gradient(90deg, #f0f1f4, #fafafa); display: flex; align-items: center; }
.sb-track { flex: 1; }
.sb-down { height: 22px; border-bottom: 1px solid #c3c7cc; }
.sb-browse { height: 50px; display: flex; flex-direction: column; justify-content: space-around; align-items: flex-start; padding: 4px 0; }

/* status */
.statusbar { height: 22px; flex: none; margin-left: 6px; display: flex; align-items: center; background: linear-gradient(#eceded, #d2d3d6 60%, #c5c7ca); border-top: 1px solid #8f9399; font-size: 10px; color: #444; }
.st { height: 100%; display: flex; align-items: center; border-right: 1px solid #a9adb2; white-space: nowrap; }
.st1 { width: 105px; padding-left: 8px; }
.st2 { width: 96px; padding-left: 10px; }
.st3 { width: 93px; padding-left: 8px; }
.st-lang { margin-left: 15px; }
.st4 { width: 35px; padding-left: 9px; }
.st-fill { flex: 1; }
.views { height: 100%; display: flex; align-items: center; border-left: 1px solid #a9adb2; padding-left: 5px; }
.view { width: 18px; height: 19px; display: flex; align-items: center; justify-content: center; }
.view.on { border: 1px solid #d8a93f; border-radius: 2px; background: linear-gradient(#ffe79a, #fbcf5f); margin-right: 0; }
.zoom-val { margin-left: 11px; width: 36px; color: #555; }
.zoomer { display: flex; align-items: center; margin-right: 11px; }
.zb { position: relative; width: 16px; height: 16px; border-radius: 50%; border: 1px solid #7f8389; background: radial-gradient(#fff, #dcdfe3); flex: none; }
.zm { position: absolute; left: 3px; top: 6px; width: 8px; height: 2px; background: #555; }
.zp { position: absolute; left: 6px; top: 3px; width: 2px; height: 8px; background: #555; }
.z-line { position: relative; width: 100px; height: 1px; background: #8d9197; }
.z-thumb { position: absolute; left: 45px; top: -6px; }

.win-bottom { height: 5px; flex: none; margin-left: -2px; background: linear-gradient(90deg, #c3dcf6, #b4d4f5 60%, #bcd9f6); }

/* downloads */
.downloads { height: 45px; flex: none; background: #fff; display: flex; font: 12px "Noto Sans", sans-serif; color: #444; position: relative; }
.dl { height: 39px; display: flex; align-items: center; border-right: 1px solid #c8c8c8; padding: 0 0 5px 20px; white-space: nowrap; flex: none; position: relative; }
.dl-name { margin-left: 12px; font-size: 12.200px; color: #453a45; }
.dl-up { margin-left: 22px; }
.dl1 { width: 237px; }
.dl2 { width: 232px; padding-left: 16px; }
.dl3 { width: 234px; padding-left: 17px; }
.dl4 { width: 232px; }
.dl5 { width: 233px; }
.dl-showall { flex: 1; position: relative; }
.showall-btn { position: absolute; right: 37px; top: 0; width: 140px; height: 31px; display: flex; align-items: center; justify-content: flex-end; padding: 0 14px 3px 0; border: 1px solid #e3e3e3; border-top: 0; border-radius: 0 0 3px 3px; color: #3c6fd8; font-size: 12.500px; white-space: nowrap; }
.dl-x { position: absolute; right: 12px; top: 10px; }

.peek { position: absolute; z-index: 2; left: 598px; top: 683px; width: 658px; height: 33px; background: #fff; border: 1px solid #5e6066; border-top: 0; border-radius: 0 0 7px 7px; padding: 0 6px 7px; box-shadow: 0 2px 5px rgba(0,0,0,.35); }
.peek-inner { height: 25px; display: flex; background: linear-gradient(#f0f3fa, #eef2fb); border: 1px solid #5f6670; border-top: 0; padding-left: 28px; color: #555; font: 12px "Noto Sans", sans-serif; }
.peek-ic { margin-right: 14px; }
.peek-inner span { margin-top: -2px; line-height: 14px; color: #4c4c54; }
.win-shadow { position: absolute; z-index: 2; left: 0; top: 683px; width: 1366px; height: 9px; background: linear-gradient(rgba(20,24,30,.55), rgba(20,24,30,0)); pointer-events: none; }

/* taskbar */
.taskbar { height: 40px; flex: none; display: flex; align-items: center; position: relative; z-index: 4; border-top: 1px solid #27404f; background: radial-gradient(circle at 880px 142px, transparent 135px, rgba(255,255,255,.22) 141px, rgba(255,255,255,.04) 151px, transparent 153px), linear-gradient(rgba(255,255,255,.16), rgba(255,255,255,.03) 45%, rgba(0,0,0,.03)), linear-gradient(90deg, #3a8fc2, #3b9bd2 25%, #2f8ccb 42%, #2a7cc3 60%, #1f64ab 78%, #14396d 97%); color: #fff; }
.tb-start { width: 61px; padding-left: 8px; }
.tb-i { height: 39px; display: flex; align-items: center; justify-content: center; flex: none; }
.tb-box { border: 1px solid rgba(215,235,250,.75); border-radius: 3px; background: linear-gradient(rgba(255,255,255,.38), rgba(255,255,255,.18)); }
.w-wmp { width: 61px; } .w-ie { width: 61px; } .w-fl { width: 63px; } .w-ch { width: 59px; } .w-ya { width: 61px; margin-left: 2px; } .w-red { width: 62px; }
.w-ex { width: 58px; margin-left: 2px; } .w-wd { width: 59px; margin-left: 3px; }
.tb-fill { flex: 1; }
.tb-lang { font: 12px "Liberation Sans", sans-serif; margin-right: 19px; padding-bottom: 3px; }
.tb-tri { margin-right: 12px; }
.tb-pw { margin-right: 10px; }
.tb-clock { width: 74px; display: flex; flex-direction: column; align-items: center; font: 12px/17px "Liberation Sans", sans-serif; margin-right: 3px; }
.tb-show { width: 14px; height: 39px; border: 1px solid rgba(220,235,250,.45); background: linear-gradient(rgba(255,255,255,.3), rgba(255,255,255,.05)); }

/* svg text */
.svg-w { font: 700 13px "Liberation Sans", sans-serif; fill: #fff; text-anchor: middle; }
.svg-aa { font: 700 7px "Liberation Sans", sans-serif; fill: #334; text-anchor: middle; }
.svg-ab { font: 700 9px "Liberation Sans", sans-serif; fill: #222; }
.svg-n { font: 700 5.500px "Liberation Sans", sans-serif; fill: #2d66b0; }
.svg-sort { font: 700 9px "Liberation Sans", sans-serif; }
.sa { fill: #2d66b0; } .sb { fill: #a8504a; }
.svg-rep { font: 700 8.500px "Liberation Sans", sans-serif; }
.g1 { fill: #666; } .g2 { fill: #2d8a2d; }
.svg-f { font: 700 8px "Liberation Sans", sans-serif; fill: #fff; text-anchor: middle; }
.svg-ie { font: 700 30px "Liberation Sans", sans-serif; fill: #1670c8; stroke: #d6eefc; stroke-width: .8px; text-anchor: middle; }
.svg-e { font: 700 13px "Liberation Sans", sans-serif; fill: #1a2fc8; text-anchor: middle; }
.svg-wd { font: 700 24px "Liberation Serif", serif; fill: #1c58b8; text-anchor: middle; }
```
